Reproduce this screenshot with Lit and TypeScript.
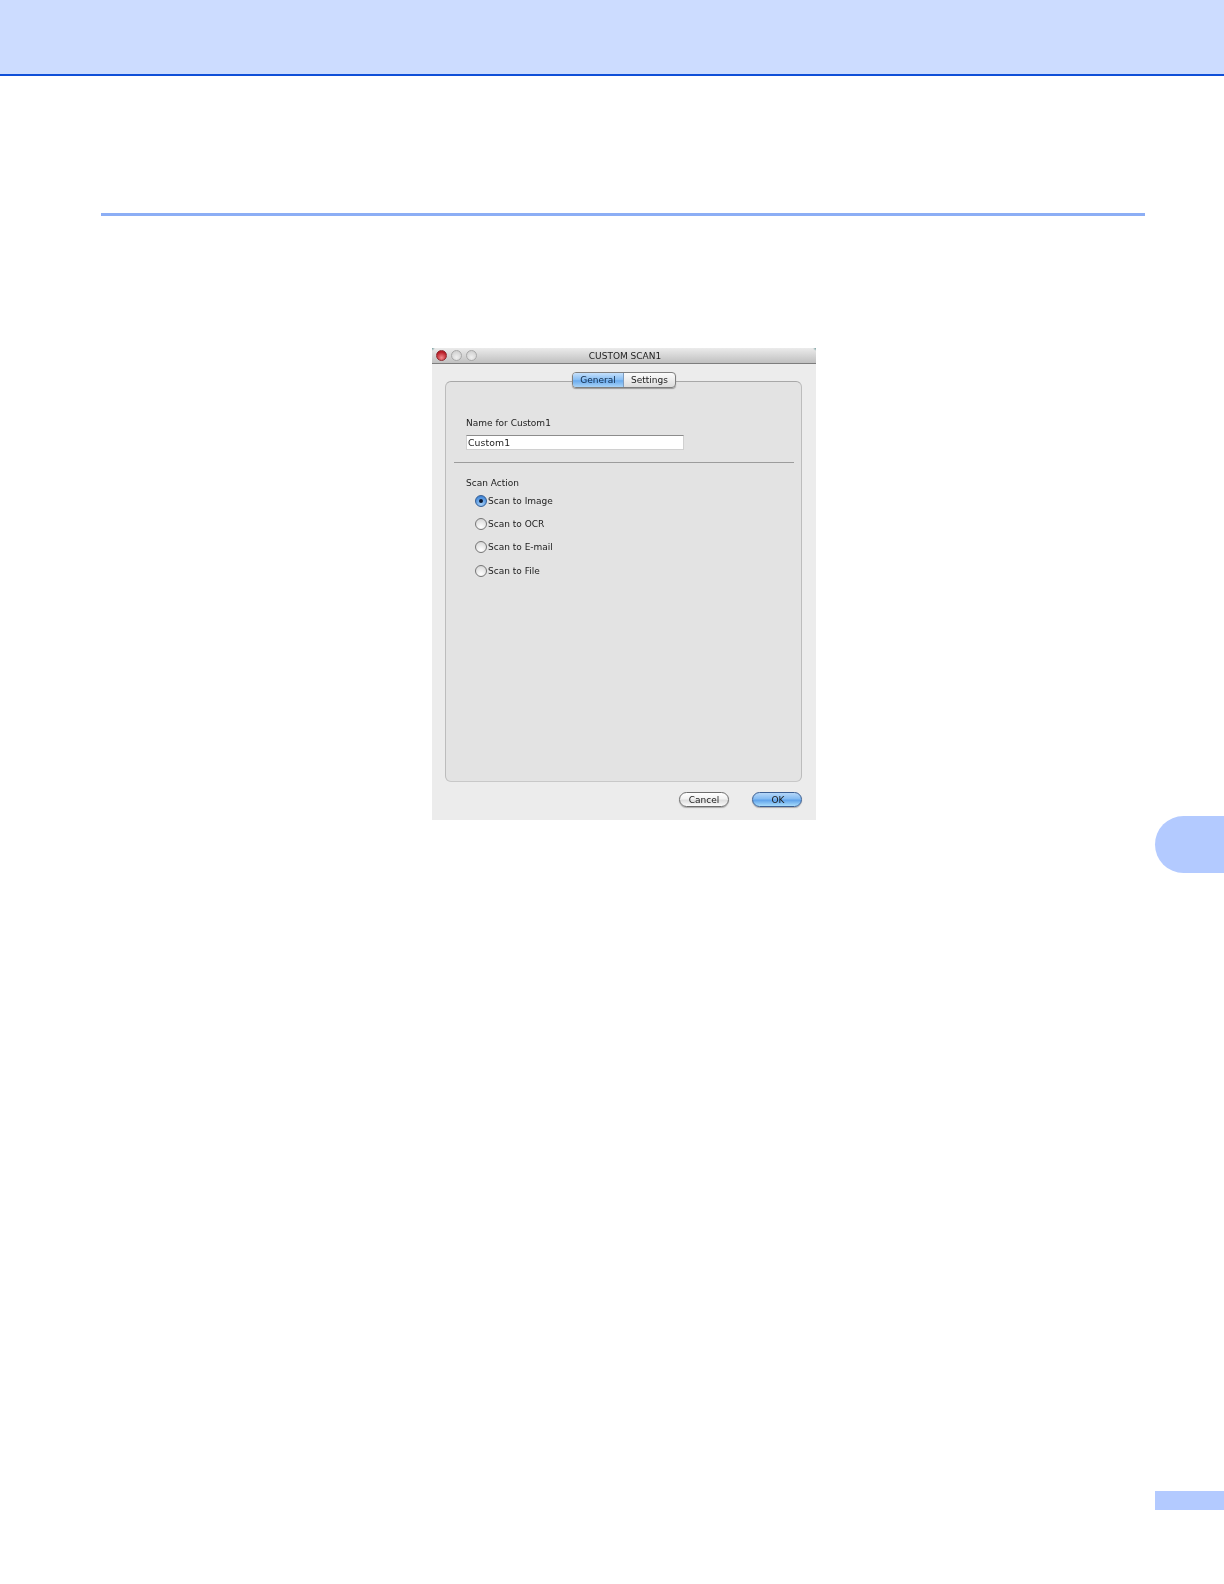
import { LitElement, html, css } from "lit";
import { customElement } from "lit/decorators.js";

@customElement("app-root")
export class AppRoot extends LitElement {
  static styles = css`
    :host { display: block; width: 1224px; height: 1584px; background: #fff; font-family: "DejaVu Sans", sans-serif; }
    .page { height: 1584px; display: flex; flex-direction: column; overflow: hidden; box-sizing: border-box; }
    .top { height: 74px; flex: none; background: #ccdcff; border-bottom: 2px solid #0f4fd8; }
    .rule { flex: none; height: 3px; background: #8caef5; margin: 137px 79px 0 101px; }
    .win { flex: none; box-sizing: border-box; width: 384px; height: 472px; margin: 132px 0 0 432px; background: #ececec; display: flex; flex-direction: column; color: #1c1c1c; filter: blur(0.4px); font-size: 9px; letter-spacing: 0; }
    .title { flex: none; height: 16px; box-sizing: border-box; border-bottom: 1px solid #7d7d7d; background: radial-gradient(circle 3px at 0 0, #6f9a9a, transparent), radial-gradient(circle 3px at 100% 0, #6f9a9a, transparent), linear-gradient(#ebebeb, #c0c0c0); display: grid; grid-template-columns: 1fr auto 1fr; align-items: center; }
    .lights { display: flex; gap: 4px; padding-left: 4px; }
    .light { width: 11px; height: 11px; border-radius: 50%; box-sizing: border-box; border: 1px solid #a8a8a8; background: radial-gradient(circle at 50% 70%, #efefef, #c8c8c8); }
    .light.red { border-color: #8e2a30; background: radial-gradient(circle at 50% 75%, #f58a8e, #b81c26 70%); }
    .ttext { white-space: nowrap; transform: translateX(1px); }
    .body { flex: 1; position: relative; padding: 17px 14px 0 13px; display: flex; flex-direction: column; min-height: 0; }
    .panel { flex: none; box-sizing: border-box; height: 401px; border: 1.5px solid #bcbcbc; border-top-color: #a8a8a8; border-bottom-color: #c8c8c8; border-radius: 6px; background: #e3e3e3; padding: 0 7px 0 8px; display: flex; flex-direction: column; }
    .tabs { position: absolute; top: 8px; left: 140px; width: 104px; height: 16px; box-sizing: border-box; display: flex; border-radius: 4px; border: 1px solid #7f7f7f; overflow: hidden; background: linear-gradient(#fbfbfb, #ececec 50%, #dcdcdc); box-shadow: 0 1px 1px #999; }
    .tab { display: flex; align-items: center; justify-content: center; flex: none; }
    .tab.on { width: 50px; background: linear-gradient(#c5e0fb, #86bdf3 50%, #6aabee 55%, #a8d3f7); color: #0e2a4a; border-right: 1px solid #7d9cc0; }
    .tab.off { flex: 1; }
    .sec { padding: 0 12px; }
    .lab { line-height: 12px; }
    .l1 { margin-top: 35px; }
    .field { margin-top: 6px; width: 218px; height: 15px; box-sizing: border-box; background: #fff; border: 1px solid #d0d0d0; border-top: 1.5px solid #8c8c8c; padding-left: 1px; line-height: 13px; font-size: 9.3px; letter-spacing: 0.1px; }
    .sep { height: 1px; background: #9c9c9c; margin-top: 12px; }
    .l2 { margin-top: 14px; }
    .radios { padding-left: 9px; display: flex; flex-direction: column; gap: 11.4px; margin-top: 5.5px; }
    .r { display: flex; align-items: center; gap: 1px; height: 12px; }
    .dot { width: 12px; height: 12px; box-sizing: border-box; border-radius: 50%; border: 1px solid #767676; background: radial-gradient(circle at 50% 80%, #fff, #e4e4e4 60%, #cfcfcf); display: flex; align-items: center; justify-content: center; }
    .dot.on { border-color: #345f96; background: radial-gradient(circle at 50% 80%, #a6d0f7, #4c8fdc 70%, #3870bd); }
    .dot.on::after { content: ""; width: 4px; height: 4px; border-radius: 50%; background: #0d1a33; }
    .btns { display: flex; justify-content: flex-end; gap: 23px; margin-top: 10px; }
    .btn { height: 15px; width: 50px; box-sizing: border-box; border-radius: 8px; border: 1px solid #6e6e6e; background: linear-gradient(#fff, #f2f2f2 45%, #dedede 55%, #fafafa); display: flex; align-items: center; justify-content: center; box-shadow: 0 1px 1px #aaa; }
    .btn.ok { border-color: #3c5f93; background: linear-gradient(#b6d7f8, #84bbf2 45%, #5fa2ea 55%, #a8dcfb); padding-left: 2px; }
    .thumb { flex: none; align-self: flex-end; width: 69px; height: 57px; background: #b3caff; border-radius: 29px 0 0 29px; margin-top: -4px; }
    .foot { flex: none; align-self: flex-end; width: 69px; height: 19px; background: #b3caff; margin-top: 618px; }
  `;

  render() {
    const radios = ["Scan to Image", "Scan to OCR", "Scan to E-mail", "Scan to File"];
    return html`<div class="page">
      <div class="top"></div>
      <div class="rule"></div>
      <div class="win">
        <div class="title">
          <div class="lights"><span class="light red"></span><span class="light"></span><span class="light"></span></div>
          <div class="ttext">CUSTOM SCAN1</div>
          <div></div>
        </div>
        <div class="body">
          <div class="tabs"><div class="tab on">General</div><div class="tab off">Settings</div></div>
          <div class="panel">
            <div class="sec">
              <div class="lab l1">Name for Custom1</div>
              <div class="field">Custom1</div>
            </div>
            <div class="sep"></div>
            <div class="sec">
              <div class="lab l2">Scan Action</div>
              <div class="radios">
                ${radios.map((r, i) => html`<div class="r"><span class="dot ${i === 0 ? "on" : ""}"></span><span>${r}</span></div>`)}
              </div>
            </div>
          </div>
          <div class="btns"><div class="btn">Cancel</div><div class="btn ok">OK</div></div>
        </div>
      </div>
      <div class="thumb"></div>
      <div class="foot"></div>
    </div>`;
  }
}
